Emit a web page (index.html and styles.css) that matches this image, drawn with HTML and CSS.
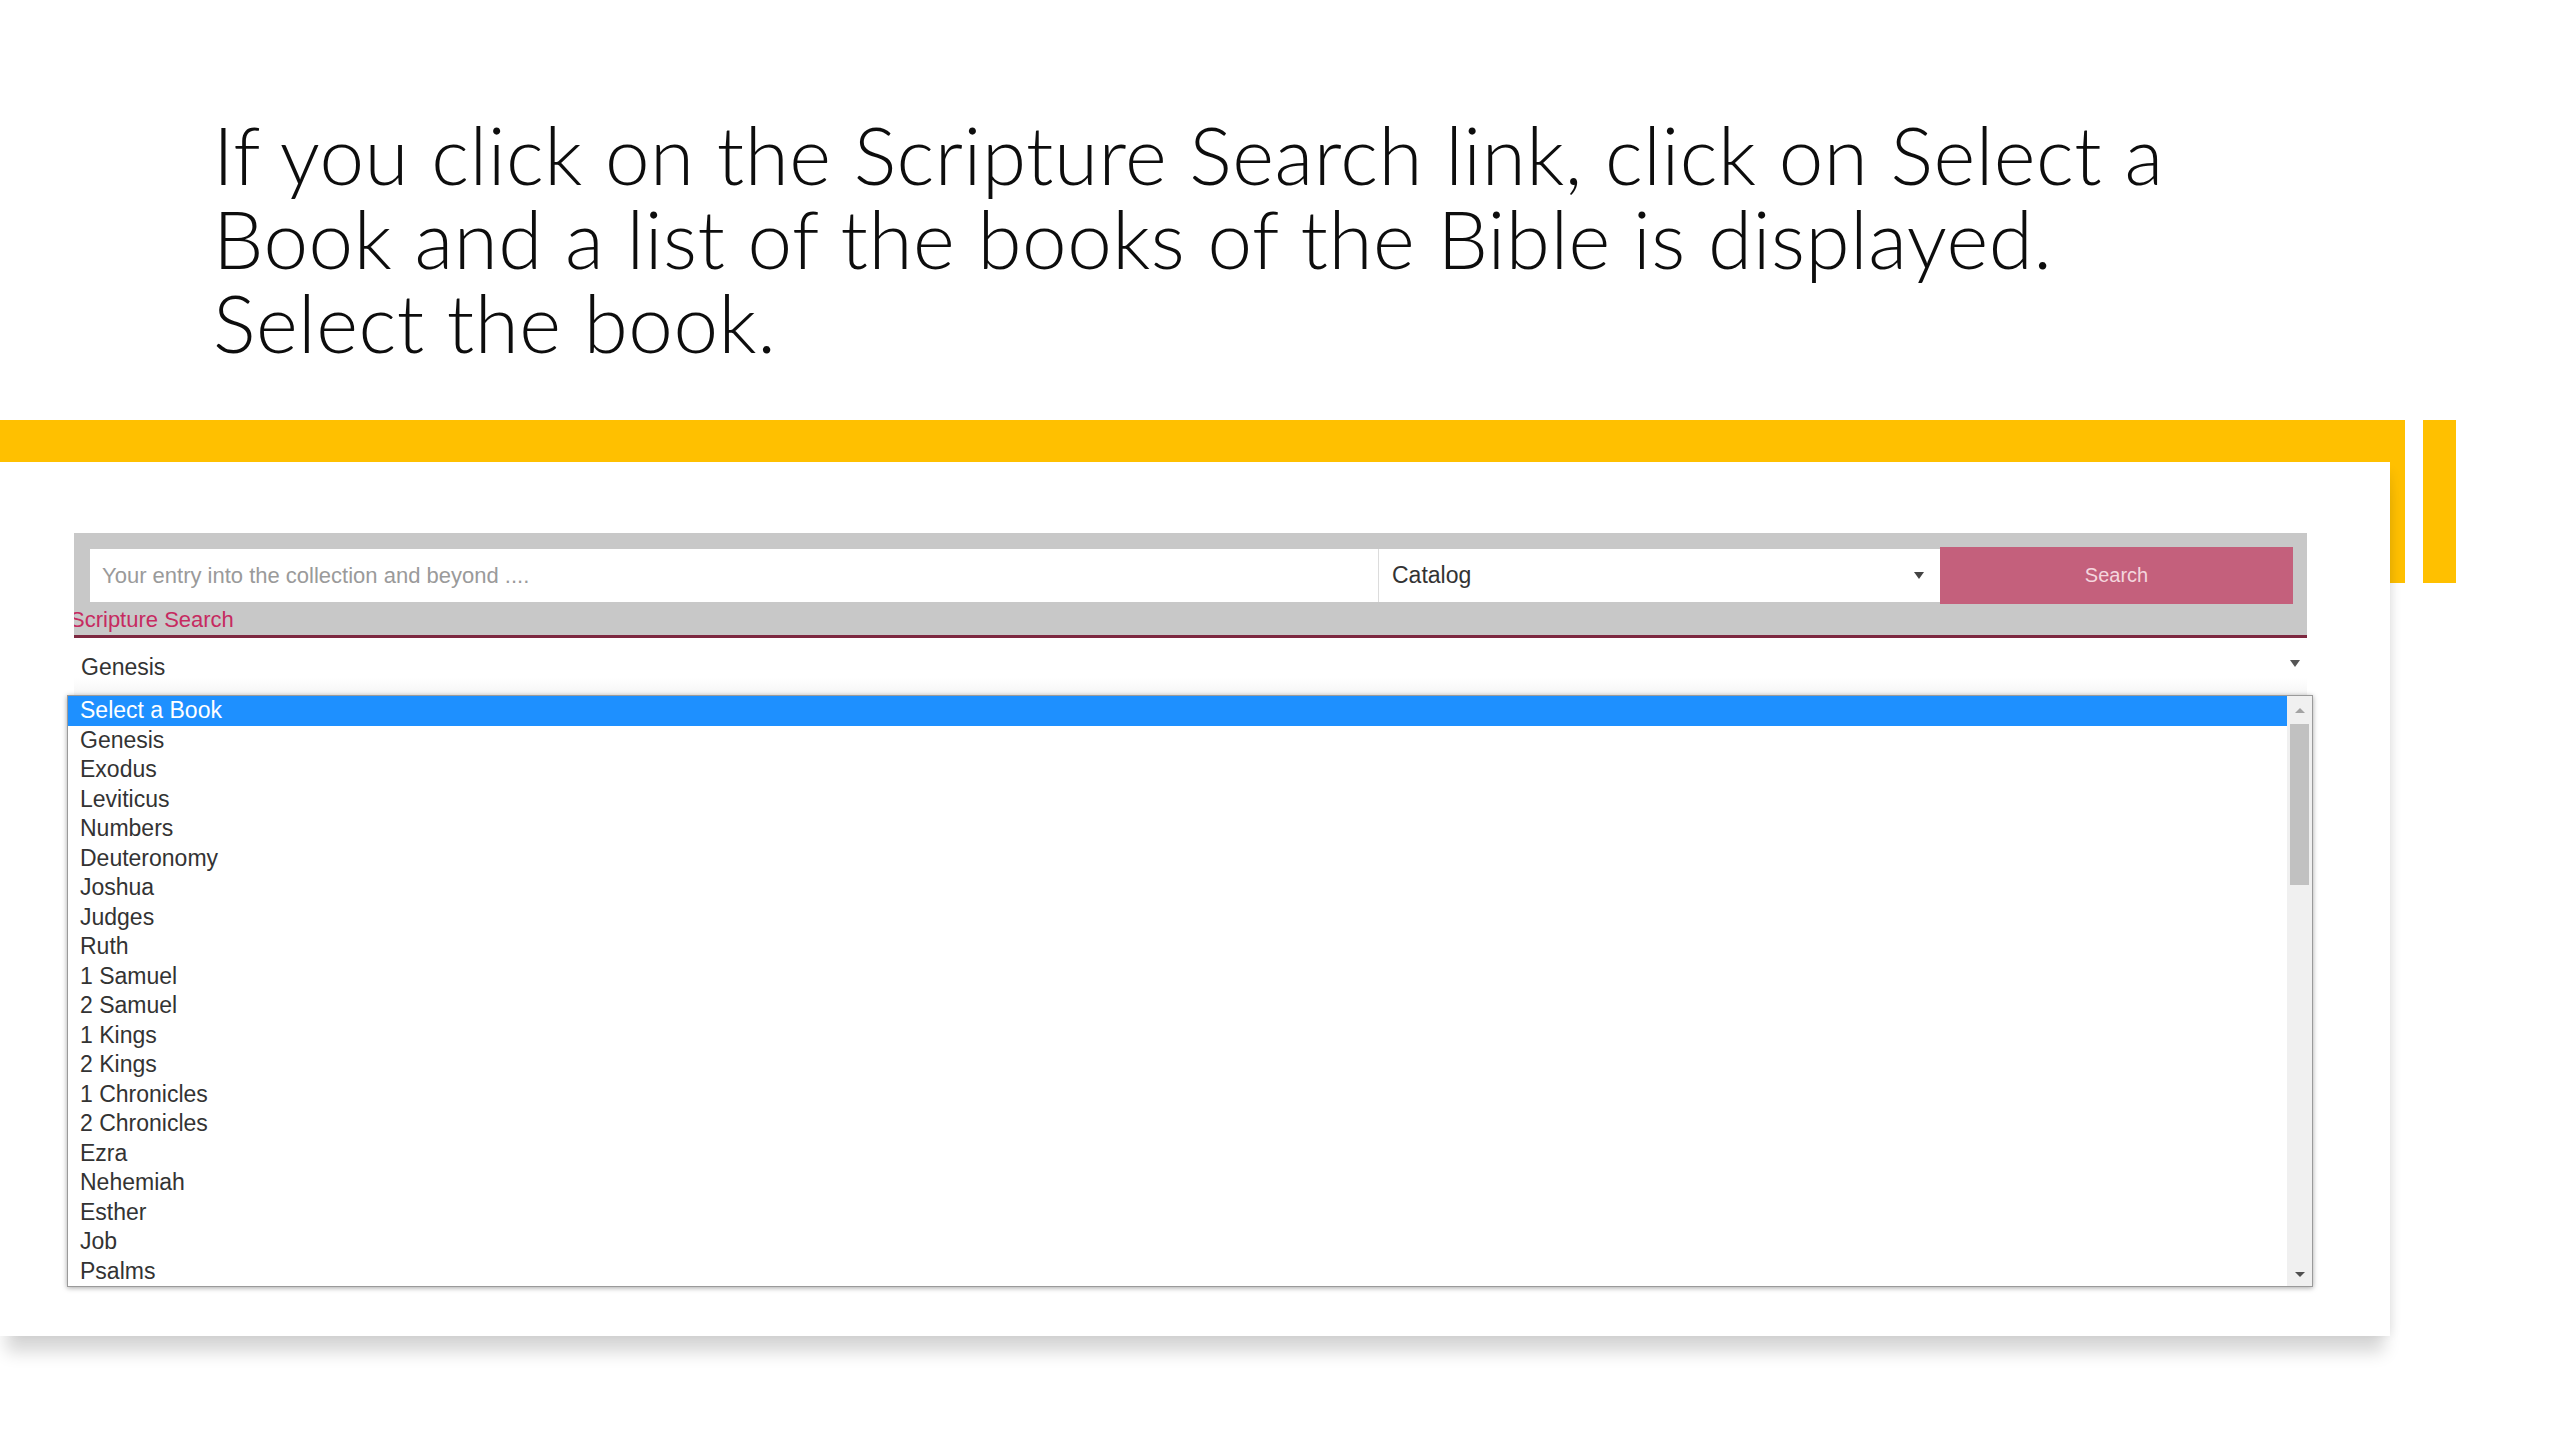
FILE: index.html
```html
<!DOCTYPE html>
<html lang="en">
<head>
<meta charset="utf-8">
<title>Scripture Search</title>
<link rel="stylesheet" href="styles.css">
</head>
<body>
<div class="slide">
  <h1 class="title">If you click on the Scripture Search link, click on Select a<br>Book and a list of the books of the Bible is displayed.<br>Select the book.</h1>
  <div class="stage">
    <div class="frame">
      <div class="accent"></div>
      <div class="card">
        <div class="searchbox">
          <div class="search-row">
            <div class="query">Your entry into the collection and beyond ....</div>
            <div class="scope"><span>Catalog</span><span class="caret"></span></div>
            <div class="btn">Search</div>
          </div>
          <div class="link">Scripture Search</div>
        </div>
        <div class="book-select"><span>Genesis</span><span class="caret"></span></div>
        <div class="listbox">
          <ul class="options">
            <li class="selected">Select a Book</li>
            <li>Genesis</li>
            <li>Exodus</li>
            <li>Leviticus</li>
            <li>Numbers</li>
            <li>Deuteronomy</li>
            <li>Joshua</li>
            <li>Judges</li>
            <li>Ruth</li>
            <li>1 Samuel</li>
            <li>2 Samuel</li>
            <li>1 Kings</li>
            <li>2 Kings</li>
            <li>1 Chronicles</li>
            <li>2 Chronicles</li>
            <li>Ezra</li>
            <li>Nehemiah</li>
            <li>Esther</li>
            <li>Job</li>
            <li>Psalms</li>
          </ul>
          <div class="scrollbar">
            <div class="arrow-box top"><span class="arrow up"></span></div>
            <div class="thumb"></div>
            <div class="track"></div>
            <div class="arrow-box bottom"><span class="arrow down"></span></div>
          </div>
        </div>
      </div>
    </div>
    <div class="side-bar"></div>
  </div>
</div>
</body>
</html>
```

FILE: styles.css
```css
html, body {
  margin: 0;
  padding: 0;
  background: #ffffff;
}

.slide {
  width: 2560px;
  height: 1440px;
  overflow: hidden;
  background: #ffffff;
}

.title {
  margin: 0;
  padding: 112px 0 0 213px;
  font-family: "Lato", "Open Sans", sans-serif;
  font-weight: 300;
  font-size: 80px;
  line-height: 84px;
  letter-spacing: 0.5px;
  color: #0d0d0d;
  white-space: nowrap;
}

.stage {
  display: flex;
  align-items: flex-start;
  margin-top: 56px;
}

.frame {
  width: 2405px;
}

.accent {
  height: 163px;
  background: #ffc000;
}

.card {
  width: 2390px;
  height: 874px;
  margin-top: -121px;
  background: #ffffff;
  box-shadow: 0 22px 16px -6px rgba(0, 0, 0, 0.16), 8px 4px 10px -6px rgba(0, 0, 0, 0.08);
  overflow: hidden;
  padding-top: 71px;
  box-sizing: border-box;
  font-family: "Liberation Sans", Arial, sans-serif;
}

.side-bar {
  width: 33px;
  height: 163px;
  margin-left: 18px;
  background: #ffc000;
}

/* search box */
.searchbox {
  margin-left: 74px;
  width: 2233px;
  box-sizing: border-box;
  padding: 14px 14px 0 16px;
  background: #c8c8c8;
  border-bottom: 3px solid #7d2840;
  overflow: hidden;
}

.search-row {
  display: flex;
  align-items: center;
  height: 57px;
}

.query {
  width: 1288px;
  height: 53px;
  box-sizing: border-box;
  padding-left: 12px;
  background: #ffffff;
  color: #9a9a9a;
  font-size: 22px;
  line-height: 53px;
}

.scope {
  width: 562px;
  height: 53px;
  box-sizing: border-box;
  padding: 0 16px 0 13px;
  background: #ffffff;
  border-left: 1px solid #dcdcdc;
  display: flex;
  align-items: center;
  justify-content: space-between;
  color: #333333;
  font-size: 23px;
}

.caret {
  width: 0;
  height: 0;
  border-left: 5px solid transparent;
  border-right: 5px solid transparent;
  border-top: 7px solid #444444;
}

.btn {
  width: 353px;
  height: 57px;
  background: #c4607c;
  color: #f4d6de;
  font-size: 20px;
  line-height: 57px;
  text-align: center;
}

.link {
  margin-left: -16px;
  height: 31px;
  line-height: 31px;
  font-size: 22px;
  color: #c62a60;
  text-indent: -4px;
  white-space: nowrap;
}

/* book select */
.book-select {
  margin-left: 74px;
  width: 2233px;
  height: 57px;
  box-sizing: border-box;
  padding: 0 7px;
  display: flex;
  align-items: center;
  justify-content: space-between;
  color: #333333;
  font-size: 23px;
  background: linear-gradient(#ffffff 70%, #f5f5f5);
}

.book-select span:first-child {
  margin-top: 2px;
}

.book-select .caret {
  border-top-color: #555555;
  margin-top: -6px;
}

/* list box */
.listbox {
  margin-left: 67px;
  width: 2246px;
  height: 592px;
  box-sizing: border-box;
  border: 1px solid #9a9a9a;
  box-shadow: 0 1px 5px rgba(0, 0, 0, 0.35);
  background: #ffffff;
  display: flex;
}

.options {
  flex: 1;
  margin: 0;
  padding: 0;
  list-style: none;
}

.options li {
  height: 29.5px;
  line-height: 29.5px;
  padding-left: 12px;
  font-size: 23px;
  color: #333333;
  white-space: nowrap;
}

.options li.selected {
  background: #1e90ff;
  color: #ffffff;
}

.scrollbar {
  width: 25px;
  background: #f0f0f0;
  display: flex;
  flex-direction: column;
  align-items: center;
}

.arrow-box {
  width: 100%;
  display: flex;
  align-items: center;
  justify-content: center;
}

.arrow-box.top {
  height: 28px;
}

.arrow-box.bottom {
  height: 24px;
}

.arrow {
  width: 0;
  height: 0;
  border-left: 5px solid transparent;
  border-right: 5px solid transparent;
}

.arrow.up {
  border-bottom: 5px solid #a3a3a3;
}

.arrow.down {
  border-top: 5px solid #505050;
}

.thumb {
  width: 19px;
  height: 161px;
  background: #c1c1c1;
}

.track {
  flex: 1;
}
```
